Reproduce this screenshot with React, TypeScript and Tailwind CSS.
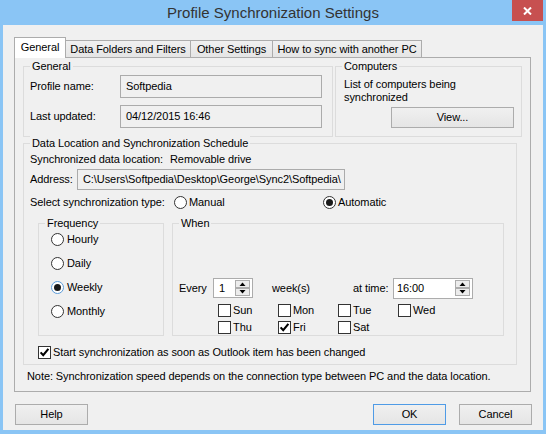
import React from "react";

function Radio({ checked = false, blue = false }: { checked?: boolean; blue?: boolean }) {
  return (
    <span
      className={
        blue
          ? "flex h-[13px] w-[13px] shrink-0 items-center justify-center rounded-full border border-[#5b9bd8] bg-white"
          : "flex h-[13px] w-[13px] shrink-0 items-center justify-center rounded-full border border-[#333333] bg-white"
      }
    >
      {checked ? <span className="h-[7px] w-[7px] rounded-full bg-[#1a1a1a]" /> : null}
    </span>
  );
}

function Check({ checked = false }: { checked?: boolean }) {
  return (
    <span className="flex h-[13px] w-[13px] shrink-0 items-center justify-center border border-[#333333] bg-white">
      {checked ? (
        <svg width="11" height="11" viewBox="0 0 11 11">
          <path d="M1.6 5.4 L4.2 8.2 L9.4 1.8" fill="none" stroke="#000" strokeWidth="2.1" />
        </svg>
      ) : null}
    </span>
  );
}

function Spinner() {
  return (
    <div className="flex flex-col">
      <div className="flex h-[8px] w-[15px] items-center justify-center border border-[#acacac] bg-[#ececec]">
        <svg width="7" height="4" viewBox="0 0 7 4">
          <path d="M0.5 4 L3.5 0.5 L6.5 4 Z" fill="#000" />
        </svg>
      </div>
      <div className="flex h-[8px] w-[15px] items-center justify-center border border-[#acacac] bg-[#ececec]">
        <svg width="7" height="4" viewBox="0 0 7 4">
          <path d="M0.5 0 L6.5 0 L3.5 3.5 Z" fill="#000" />
        </svg>
      </div>
    </div>
  );
}

function Group({
  title,
  className,
  pad,
  children,
}: {
  title: string;
  className: string;
  pad: string;
  children?: React.ReactNode;
}) {
  return (
    <div className={"flex flex-col border border-[#dcdcdc] " + className}>
      <span className="-mt-[8px] ml-[6px] h-[14px] self-start bg-[#f0f0f0] px-[2px] leading-[14px]">{title}</span>
      <div className={"flex flex-col " + pad}>{children}</div>
    </div>
  );
}

function Button({ label, primary = false }: { label: string; primary?: boolean }) {
  return (
    <div
      className={
        primary
          ? "flex h-[21px] w-[73px] items-center justify-center border border-[#4f9be6] bg-linear-to-b from-[#f0f0f0] to-[#e5e5e5]"
          : "flex h-[21px] w-[73px] items-center justify-center border border-[#acacac] bg-linear-to-b from-[#f0f0f0] to-[#e5e5e5]"
      }
    >
      {label}
    </div>
  );
}

function DayCheck({ label, checked = false }: { label: string; checked?: boolean }) {
  return (
    <div className="flex h-[13px] items-center gap-[2px]">
      <Check checked={checked} />
      <span>{label}</span>
    </div>
  );
}

export default function App() {
  return (
    <div className="flex h-[434px] w-[546px] flex-col overflow-hidden bg-[#8ac5f5] font-['Liberation_Sans',Arial,sans-serif] text-[11px] tracking-[-0.08px] text-black">
      {/* Title bar */}
      <div className="grid h-[25px] shrink-0 grid-cols-[1fr_auto_1fr] items-start">
        <div />
        <div className="pt-[3px] text-[15px] leading-[20px] tracking-[0px] text-[#333333]">Profile Synchronization Settings</div>
        <div className="flex justify-end pr-[3px]">
          <div className="flex h-[21px] w-[31px] items-center justify-center bg-[#c75050]">
            <svg width="9" height="8" viewBox="0 0 9 8">
              <path d="M1 0.5 L8 7.5 M8 0.5 L1 7.5" stroke="#fff" strokeWidth="2" />
            </svg>
          </div>
        </div>
      </div>

      {/* Body */}
      <div className="mx-[3px] mb-[4px] flex flex-1 flex-col bg-[#f0f0f0] pl-[11px] pt-[12px]">
        {/* Tabs */}
        <div className="flex items-end">
          <div className="relative z-10 -mb-[1px] flex h-[21px] w-[52px] items-center justify-center border border-b-0 border-[#acacac] bg-white pb-[1px]">
            General
          </div>
          <div className="-ml-[1px] flex h-[17px] w-[126px] items-center justify-center border border-b-0 border-[#acacac] bg-linear-to-b from-[#f0f0f0] to-[#e5e5e5]">
            Data Folders and Filters
          </div>
          <div className="-ml-[1px] flex h-[17px] w-[83px] items-center justify-center border border-b-0 border-[#acacac] bg-linear-to-b from-[#f0f0f0] to-[#e5e5e5]">
            Other Settings
          </div>
          <div className="-ml-[1px] flex h-[17px] w-[150px] items-center justify-center border border-b-0 border-[#acacac] bg-linear-to-b from-[#f0f0f0] to-[#e5e5e5]">
            How to sync with another PC
          </div>
        </div>

        {/* Pane */}
        <div className="flex h-[335px] w-[517px] flex-col border border-[#acacac] bg-[#f0f0f0] pl-[8px] pt-[8px]">
          {/* Row 1 */}
          <div className="flex gap-[2px]">
            <Group title="General" className="h-[71px] w-[310px]" pad="pl-[6px]">
              <div className="mt-[2px] flex items-center">
                <span className="w-[90px]">Profile name:</span>
                <div className="flex h-[23px] w-[202px] items-center border border-[#ababab] bg-[#f0f0f0] pl-[5px]">Softpedia</div>
              </div>
              <div className="mt-[7px] flex items-center">
                <span className="w-[90px]">Last updated:</span>
                <div className="flex h-[23px] w-[202px] items-center border border-[#ababab] bg-[#f0f0f0] pl-[5px]">04/12/2015 16:46</div>
              </div>
            </Group>
            <Group title="Computers" className="h-[71px] w-[187px]" pad="pl-[8px]">
              <div className="mt-[5px] leading-[13px]">
                List of computers being
                <br />
                synchronized
              </div>
              <div className="mr-[7px] mt-[3px] self-end">
                <div className="flex h-[21px] w-[123px] items-center justify-center border border-[#acacac] bg-linear-to-b from-[#f0f0f0] to-[#e5e5e5]">
                  View...
                </div>
              </div>
            </Group>
          </div>

          {/* Data location group */}
          <Group title="Data Location and Synchronization Schedule" className="mt-[6px] h-[222px] w-[494px]" pad="pl-[6px]">
            <div className="mt-[3px] flex h-[13px] items-center">
              <span className="w-[140px]">Synchronized data location:</span>
              <span>Removable drive</span>
            </div>
            <div className="mt-[3px] flex items-center">
              <span className="w-[47px]">Address:</span>
              <div className="flex h-[21px] w-[268px] items-center overflow-hidden whitespace-nowrap border border-[#ababab] bg-[#f0f0f0] pl-[5px]">
                C:\Users\Softpedia\Desktop\George\Sync2\Softpedia\
              </div>
            </div>
            <div className="mt-[5px] flex h-[14px] items-center">
              <span className="w-[144px]">Select synchronization type:</span>
              <div className="flex w-[149px] items-center gap-[2px]">
                <Radio />
                <span>Manual</span>
              </div>
              <div className="flex items-center gap-[2px]">
                <Radio checked />
                <span>Automatic</span>
              </div>
            </div>

            <div className="ml-[8px] mt-[14px] flex gap-[8px]">
              <Group title="Frequency" className="h-[113px] w-[126px]" pad="pl-[12px]">
                <div className="mt-[2px] flex flex-col gap-[10px]">
                  <div className="flex h-[14px] items-center gap-[3px]">
                    <Radio />
                    <span>Hourly</span>
                  </div>
                  <div className="flex h-[14px] items-center gap-[3px]">
                    <Radio />
                    <span>Daily</span>
                  </div>
                  <div className="flex h-[14px] items-center gap-[3px]">
                    <Radio checked blue />
                    <span>Weekly</span>
                  </div>
                  <div className="flex h-[14px] items-center gap-[3px]">
                    <Radio />
                    <span>Monthly</span>
                  </div>
                </div>
              </Group>
              <Group title="When" className="h-[113px] w-[332px]" pad="pl-[6px]">
                <div className="mt-[48px] flex h-[20px] items-center">
                  <span className="w-[34px]">Every</span>
                  <div className="flex h-[20px] w-[40px] items-center justify-between border border-[#acacac] bg-white pl-[5px] pr-[2px]">
                    <span>1</span>
                    <Spinner />
                  </div>
                  <span className="ml-[19px] w-[81px]">week(s)</span>
                  <span className="w-[40px]">at time:</span>
                  <div className="flex h-[21px] w-[80px] items-center justify-between border border-[#acacac] bg-white pl-[3px] pr-[2px]">
                    <span>16:00</span>
                    <Spinner />
                  </div>
                </div>
                <div className="ml-[39px] mt-[6px] grid grid-cols-[60px_60px_60px_60px] gap-y-[4px]">
                  <DayCheck label="Sun" />
                  <DayCheck label="Mon" />
                  <DayCheck label="Tue" />
                  <DayCheck label="Wed" />
                  <DayCheck label="Thu" />
                  <DayCheck label="Fri" checked />
                  <DayCheck label="Sat" />
                </div>
              </Group>
            </div>

            <div className="ml-[8px] mt-[10px] flex h-[13px] items-center gap-[2px]">
              <Check checked />
              <span>Start synchronization as soon as Outlook item has been changed</span>
            </div>
          </Group>

          <div className="ml-[4px] mt-[5px] h-[13px] leading-[13px]">
            Note: Synchronization speed depends on the connection type between PC and the data location.
          </div>
        </div>

        {/* Buttons */}
        <div className="ml-[1px] mt-[12px] flex w-[517px] justify-between">
          <Button label="Help" />
          <div className="flex gap-[13px]">
            <Button label="OK" primary />
            <Button label="Cancel" />
          </div>
        </div>
      </div>
    </div>
  );
}
